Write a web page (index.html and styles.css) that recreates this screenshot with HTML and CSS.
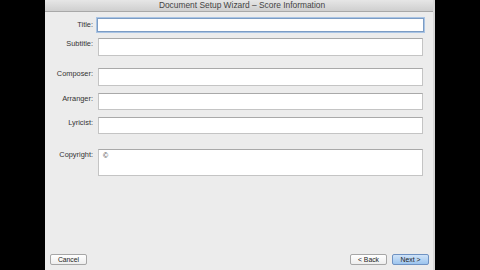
FILE: index.html
```html
<!DOCTYPE html>
<html>
<head>
<meta charset="utf-8">
<link rel="stylesheet" href="styles.css">
</head>
<body>
<div class="window">
  <div class="titlebar">Document Setup Wizard – Score Information</div>
  <div class="content">
    <div class="form">
      <div class="row r-title"><label>Title:</label><div class="field focus"></div></div>
      <div class="row r-subtitle"><label>Subtitle:</label><div class="field h18"></div></div>
      <div class="row r-composer"><label>Composer:</label><div class="field h18"></div></div>
      <div class="row r-arranger"><label>Arranger:</label><div class="field h17"></div></div>
      <div class="row r-lyricist"><label>Lyricist:</label><div class="field h17"></div></div>
      <div class="row r-copyright"><label>Copyright:</label><div class="field h27">©</div></div>
    </div>
    <div class="buttons">
      <div class="btn">Cancel</div>
      <div class="spacer"></div>
      <div class="btn">&lt; Back</div>
      <div class="btn primary">Next &gt;</div>
    </div>
  </div>
</div>
</body>
</html>
```
FILE: styles.css
```css
html, body {
  margin: 0;
  padding: 0;
  background: #000;
  width: 480px;
  height: 270px;
  overflow: hidden;
}
body {
  display: flex;
  justify-content: flex-start;
  font-family: "Liberation Sans", Arial, sans-serif;
}
.window {
  margin-left: 45px;
  width: 388px;
  height: 270px;
  background: #ececec;
  border-right: 2px solid #d8d8d8;
  display: flex;
  flex-direction: column;
}
.titlebar {
  height: 11px;
  line-height: 11px;
  background: linear-gradient(#e6e6e6, #cfcfcf);
  border-bottom: 1px solid #a8a8a8;
  text-align: center;
  font-size: 8.4px;
  color: #444;
  padding-left: 6px;
}
.content {
  flex: 1;
  display: flex;
  flex-direction: column;
  padding: 6px 0 5px 0;
}
.form {
  flex: 1;
  display: flex;
  flex-direction: column;
}
.row {
  display: flex;
  gap: 5px;
}
.row label {
  width: 48px;
  text-align: right;
  font-size: 7.4px;
  color: #333;
  line-height: 10px;
  padding-top: 1px;
  white-space: nowrap;
}
.r-title label { padding-top: 2px; }
.field {
  width: 325px;
  height: 13px;
  background: #fff;
  border: 1px solid #c4c4c4;
  border-top-color: #a9a9a9;
  font-size: 7px;
  color: #333;
  padding-left: 4px;
  box-sizing: border-box;
  line-height: 10px;
  padding-top: 1px;
}
.field.focus {
  width: 327px;
  height: 14px;
  border: 1px solid #7c9cc4;
  box-shadow: 0 0 0 1px #a9c4e4;
  margin-left: -1px;
}
.field.h18 { height: 18px; }
.field.h17 { height: 17px; }
.field.h27 { height: 27px; }
.r-subtitle { margin-top: 6px; }
.r-composer { margin-top: 12px; }
.r-arranger { margin-top: 7px; }
.r-lyricist { margin-top: 7px; }
.r-copyright { margin-top: 15px; }
.buttons {
  display: flex;
  gap: 5px;
  padding: 0 4px 0 5px;
}
.spacer { flex: 1; }
.btn {
  width: 37px;
  height: 11px;
  box-sizing: border-box;
  border: 1px solid #a6a6a6;
  border-radius: 2px;
  background: linear-gradient(#ffffff, #ededed);
  font-size: 6.8px;
  line-height: 9px;
  text-align: center;
  color: #222;
}
.btn.primary {
  background: linear-gradient(#cfe3f8, #9cc4ee);
  border-color: #6f92c2;
}
```
